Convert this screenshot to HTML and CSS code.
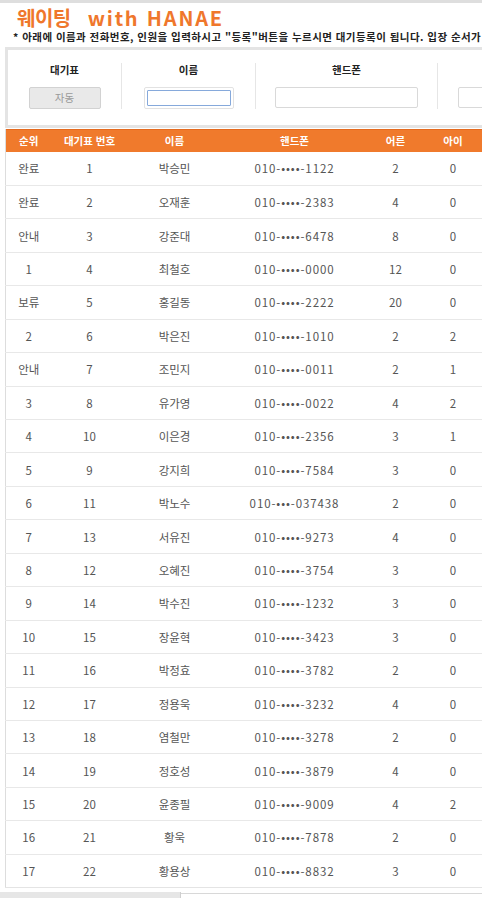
FILE: index.html
```html
<!DOCTYPE html>
<html lang="ko">
<head>
<meta charset="utf-8">
<title>웨이팅 with HANAE</title>
<link rel="stylesheet" href="styles.css">
</head>
<body>
<div class="top-strip"></div>
<div class="page">
  <h1 class="title"><span class="title-ko">웨이팅</span><span class="title-en">with HANAE</span></h1>
  <p class="notice">* 아래에 이름과 전화번호, 인원을 입력하시고 "등록"버튼을 누르시면 대기등록이 됩니다. 입장 순서가 되면 문자로 알려드립니다.</p>

  <div class="form-box">
    <div class="field f-ticket">
      <label class="f-label">대기표</label>
      <button class="auto-btn" type="button">자동</button>
    </div>
    <div class="field f-name">
      <label class="f-label">이름</label>
      <span class="focus-ring"><input class="f-input name-input" type="text"></span>
    </div>
    <div class="field f-phone">
      <label class="f-label">핸드폰</label>
      <input class="f-input phone-input" type="text">
    </div>
    <div class="field f-people">
      <span class="f-label"></span>
      <input class="f-input people-input" type="text">
    </div>
  </div>

  <table class="wait-table">
    <colgroup>
      <col class="c-rank"><col class="c-no"><col class="c-name"><col class="c-phone"><col class="c-adult"><col class="c-kid"><col class="c-extra">
    </colgroup>
    <thead>
      <tr><th>순위</th><th>대기표 번호</th><th>이름</th><th>핸드폰</th><th>어른</th><th>아이</th><th></th></tr>
    </thead>
    <tbody>
      <tr><td>완료</td><td>1</td><td>박승민</td><td>010-••••-1122</td><td>2</td><td>0</td><td></td></tr>
      <tr><td>완료</td><td>2</td><td>오재훈</td><td>010-••••-2383</td><td>4</td><td>0</td><td></td></tr>
      <tr><td>안내</td><td>3</td><td>강준대</td><td>010-••••-6478</td><td>8</td><td>0</td><td></td></tr>
      <tr><td>1</td><td>4</td><td>최철호</td><td>010-••••-0000</td><td>12</td><td>0</td><td></td></tr>
      <tr><td>보류</td><td>5</td><td>홍길동</td><td>010-••••-2222</td><td>20</td><td>0</td><td></td></tr>
      <tr><td>2</td><td>6</td><td>박은진</td><td>010-••••-1010</td><td>2</td><td>2</td><td></td></tr>
      <tr><td>안내</td><td>7</td><td>조민지</td><td>010-••••-0011</td><td>2</td><td>1</td><td></td></tr>
      <tr><td>3</td><td>8</td><td>유가영</td><td>010-••••-0022</td><td>4</td><td>2</td><td></td></tr>
      <tr><td>4</td><td>10</td><td>이은경</td><td>010-••••-2356</td><td>3</td><td>1</td><td></td></tr>
      <tr><td>5</td><td>9</td><td>강지희</td><td>010-••••-7584</td><td>3</td><td>0</td><td></td></tr>
      <tr><td>6</td><td>11</td><td>박노수</td><td>010-•••-037438</td><td>2</td><td>0</td><td></td></tr>
      <tr><td>7</td><td>13</td><td>서유진</td><td>010-••••-9273</td><td>4</td><td>0</td><td></td></tr>
      <tr><td>8</td><td>12</td><td>오혜진</td><td>010-••••-3754</td><td>3</td><td>0</td><td></td></tr>
      <tr><td>9</td><td>14</td><td>박수진</td><td>010-••••-1232</td><td>3</td><td>0</td><td></td></tr>
      <tr><td>10</td><td>15</td><td>장윤혁</td><td>010-••••-3423</td><td>3</td><td>0</td><td></td></tr>
      <tr><td>11</td><td>16</td><td>박정효</td><td>010-••••-3782</td><td>2</td><td>0</td><td></td></tr>
      <tr><td>12</td><td>17</td><td>정용욱</td><td>010-••••-3232</td><td>4</td><td>0</td><td></td></tr>
      <tr><td>13</td><td>18</td><td>염철만</td><td>010-••••-3278</td><td>2</td><td>0</td><td></td></tr>
      <tr><td>14</td><td>19</td><td>정호성</td><td>010-••••-3879</td><td>4</td><td>0</td><td></td></tr>
      <tr><td>15</td><td>20</td><td>윤종필</td><td>010-••••-9009</td><td>4</td><td>2</td><td></td></tr>
      <tr><td>16</td><td>21</td><td>황욱</td><td>010-••••-7878</td><td>2</td><td>0</td><td></td></tr>
      <tr><td>17</td><td>22</td><td>황용상</td><td>010-••••-8832</td><td>3</td><td>0</td><td></td></tr>
    </tbody>
  </table>
</div>
<div class="bottom-bar"><div class="bottom-thumb"></div></div>
</body>
</html>
```
FILE: styles.css
```css
html, body {
  margin: 0;
  padding: 0;
  background: #ffffff;
  overflow: hidden;
}

body {
  font-family: "Noto Sans CJK KR", "Noto Sans", sans-serif;
  color: #333;
  width: 482px;
  height: 900px;
}

.top-strip {
  height: 3px;
  background: #dedede;
}

.page {
  width: 620px;
  padding-left: 5px;
}

.title {
  margin: 4px 0 0 12px;
  font-size: 20px;
  line-height: 22px;
  font-weight: 700;
  color: #ef772c;
  white-space: nowrap;
}

.title-ko {
  letter-spacing: -0.5px;
}

.title-en {
  margin-left: 17px;
  letter-spacing: 1.8px;
}

.notice {
  margin: 1px 0 0 8px;
  font-size: 10.5px;
  line-height: 13px;
  font-weight: 700;
  color: #222;
  white-space: nowrap;
  letter-spacing: 0.45px;
}

.form-box {
  margin-top: 4px;
  height: 75px;
  border: 3px solid #e4e4e4;
  background: #fff;
  display: flex;
  align-items: flex-start;
  box-sizing: content-box;
}

.field {
  margin-top: 13px;
  height: 46px;
  display: flex;
  flex-direction: column;
  align-items: center;
  box-sizing: border-box;
}

.field + .field {
  border-left: 1px solid #e6e6e6;
}

.f-ticket { width: 113px; }
.f-name { width: 134px; }
.f-phone { width: 182px; }
.f-people { width: 160px; align-items: flex-start; padding-left: 20px; }

.f-label {
  font-size: 10.5px;
  line-height: 14px;
  font-weight: 700;
  color: #222;
  height: 14px;
}

.auto-btn {
  margin-top: 10px;
  width: 72px;
  height: 22px;
  padding: 0;
  border: 1px solid #d2d2d2;
  border-radius: 2px;
  background: #e9e9e9;
  color: #9a9a9a;
  font-family: "Noto Sans CJK KR", sans-serif;
  font-size: 10.5px;
  line-height: 20px;
}

.focus-ring {
  margin-top: 10px;
  display: block;
  padding: 2px;
  border: 1px solid #e2e2e2;
  border-radius: 2px;
}

.f-input {
  box-sizing: border-box;
  border: 1px solid #d9d9d9;
  border-radius: 2px;
  background: #fff;
  height: 21px;
  padding: 0 4px;
  font-family: "Noto Sans CJK KR", sans-serif;
  font-size: 11px;
  outline: none;
}

.name-input {
  width: 84px;
  height: 16px;
  border: 1.5px solid #86a9db;
  border-radius: 1px;
  display: block;
}

.phone-input {
  margin-top: 10px;
  width: 143px;
}

.people-input {
  margin-top: 10px;
  width: 80px;
}

.wait-table {
  margin-top: 1px;
  border-collapse: collapse;
  table-layout: fixed;
  width: 537px;
  border-left: 1px solid #dddddd;
  border-bottom: 1px solid #e4e4e4;
}

.c-rank { width: 46px; }
.c-no { width: 76px; }
.c-name { width: 94px; }
.c-phone { width: 146px; }
.c-adult { width: 56px; }
.c-kid { width: 59px; }
.c-extra { width: 60px; }

.wait-table th {
  height: 23px;
  padding: 0;
  background: #f07a2c;
  color: #ffffff;
  font-size: 10.5px;
  font-weight: 700;
  text-align: center;
  white-space: nowrap;
  box-shadow: inset 0 1px 0 #e46a1e;
}

.wait-table td {
  height: 33.44px;
  padding: 0;
  text-align: center;
  font-size: 11.5px;
  color: #555;
  border-top: 1px solid #e8e8e8;
  box-sizing: border-box;
  white-space: nowrap;
}

.wait-table td:nth-child(4) {
  letter-spacing: 0.9px;
}

.wait-table tbody tr:first-child td {
  border-top: none;
}

.bottom-bar {
  margin-top: 5px;
  height: 1px;
  background: #d8d8d8;
  position: relative;
}

.bottom-thumb {
  position: absolute;
  left: 0;
  top: -1px;
  width: 180px;
  height: 6px;
  background: #e6e6e6;
  border-right: 1px solid #cfcfcf;
}
```
